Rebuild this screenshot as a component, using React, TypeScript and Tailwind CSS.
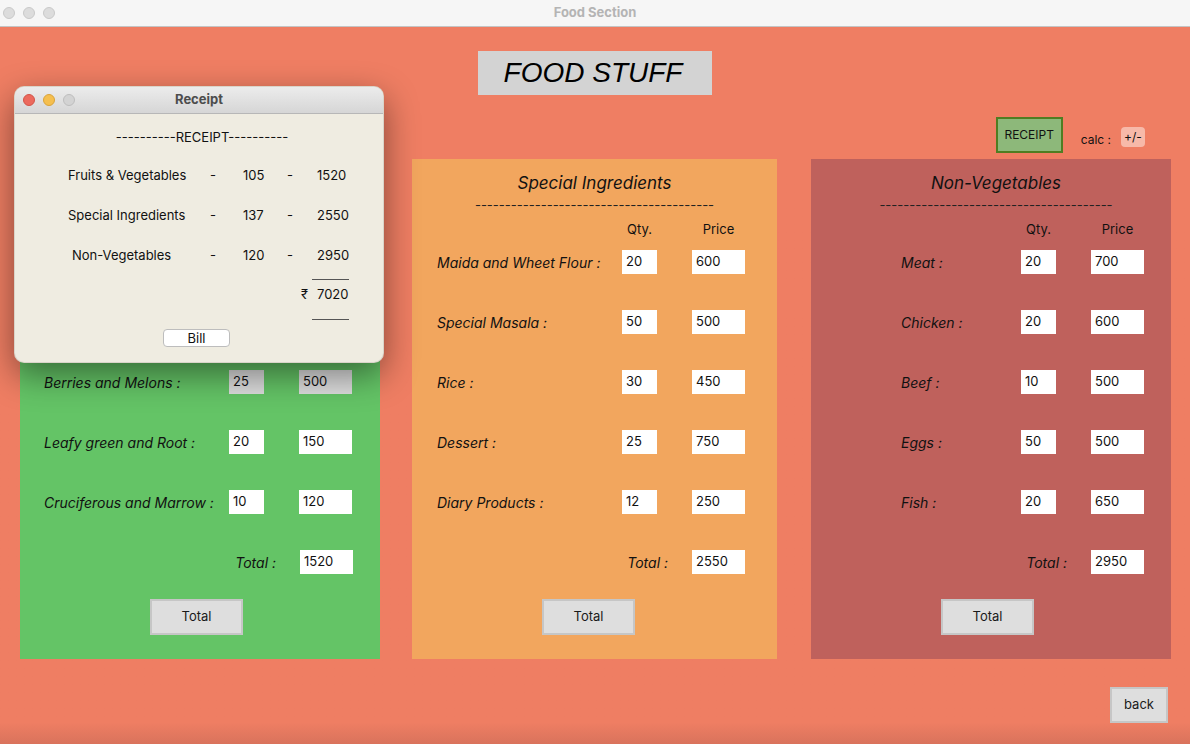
import React from "react";

type Row = { label: string; qty: string; price: string };

const FONT = "font-['Inter','Noto_Sans',sans-serif]";

// ── small bits ─────────────────────────────────────────────────────────────
function Field({ value, w, dim }: { value: string; w: string; dim?: boolean }) {
  return (
    <div
      className={`${w} h-6 flex items-center pl-[4px] text-[13px] text-[#111] ${
        dim ? "bg-[#dcdcdc]" : "bg-white"
      }`}
    >
      {value}
    </div>
  );
}

function GreyButton({ label, className }: { label: string; className?: string }) {
  return (
    <button
      className={`h-9 flex items-center justify-center bg-[#dedede] border-2 border-[#c6c6c6] text-[13px] text-[#1a1a1a] ${className ?? ""}`}
    >
      {label}
    </button>
  );
}

// ── one food panel ─────────────────────────────────────────────────────────
function Panel({
  title,
  dashes,
  rows,
  total,
  bg,
  width,
  labelW,
  labelPad,
  headPad = "",
  dimRows = [],
}: {
  title: string;
  dashes: string;
  rows: Row[];
  total: string;
  bg: string;
  width: string;
  labelW: string;
  labelPad: string;
  headPad?: string;
  dimRows?: number[];
}) {
  return (
    <section className={`${bg} ${width} h-[500px] pt-[13px] flex flex-col`}>
      <h2 className={`h-[22px] leading-[22px] text-center italic text-[17px] text-[#111] ${headPad}`}>{title}</h2>
      <div className={`mt-[3px] h-4 leading-4 text-center text-[13px] text-[#222] whitespace-nowrap ${headPad}`}>
        {dashes}
      </div>

      <div className="mt-[9px] h-4 flex items-center text-[13px] text-[#111]">
        <div className="w-[210px]" />
        <div className="w-[35px] text-center">Qty.</div>
        <div className="w-[35px]" />
        <div className="w-[53px] text-center">Price</div>
      </div>

      <div className="mt-3 flex flex-col gap-9">
        {rows.map((r, i) => (
          <div key={i} className="h-6 flex items-center">
            <div className={`${labelPad} ${labelW} italic text-[14px] text-[#111] whitespace-nowrap`}>{r.label}</div>
            <Field value={r.qty} w="w-[35px]" dim={dimRows.includes(i)} />
            <div className="w-[35px]" />
            <Field value={r.price} w="w-[53px]" dim={dimRows.includes(i)} />
          </div>
        ))}
        <div className="h-6 flex items-center">
          <div className="w-[258px] pr-[2px] text-right italic text-[14px] text-[#111]">Total :</div>
          <div className="w-[22px]" />
          <Field value={total} w="w-[53px]" />
        </div>
      </div>

      <div className="mt-[25px] pl-[130px]">
        <GreyButton label="Total" className="w-[93px]" />
      </div>
    </section>
  );
}

// ── receipt popup ──────────────────────────────────────────────────────────
function ReceiptRow({ label, qty, amt, pad }: { label: string; qty: string; amt: string; pad?: string }) {
  return (
    <div className="h-4 flex items-center text-[13px] text-[#111]">
      <div className={pad ?? "w-[142px] pl-[53px] box-content"}>{label}</div>
      <div className="w-[33px]">-</div>
      <div className="w-[44px]">{qty}</div>
      <div className="w-[30px]">-</div>
      <div>{amt}</div>
    </div>
  );
}

function ReceiptWindow() {
  return (
    <div className="absolute left-[14px] top-[59px] w-[370px] h-[277px] rounded-[10px] overflow-hidden bg-[#efece1] shadow-[0_12px_34px_rgba(0,0,0,0.45)] border border-[#b9b2a6]/40">
      <div className="h-[27px] relative flex items-center justify-center bg-gradient-to-b from-[#ececec] to-[#d6d6d6] border-b border-[#b7b7b7]">
        <div className="absolute left-[8px] top-[7px] flex gap-2">
          <span className="w-3 h-3 rounded-full bg-[#ec6a5e] border border-[#d25448]" />
          <span className="w-3 h-3 rounded-full bg-[#f5bf4f] border border-[#d9a33a]" />
          <span className="w-3 h-3 rounded-full bg-[#d3d3d3] border border-[#bdbdbd]" />
        </div>
        <span className="text-[13px] font-bold text-[#4d4d4d]">Receipt</span>
      </div>

      <div className="pt-[14px] flex flex-col">
        <div className="h-4 text-center text-[13px] text-[#111] pl-[6px]">----------RECEIPT----------</div>
        <div className="mt-6 flex flex-col gap-6">
          <ReceiptRow label="Fruits & Vegetables" qty="105" amt="1520" />
          <ReceiptRow label="Special Ingredients" qty="137" amt="2550" />
          <ReceiptRow label="Non-Vegetables" qty="120" amt="2950" pad="w-[138px] pl-[57px] box-content" />
        </div>
        <div className="mt-[15px] ml-[297px] w-[37px] h-px bg-[#555]" />
        <div className="mt-[7px] h-4 flex items-center text-[13px] text-[#111]">
          <div className="w-[286px]" />
          <div className="w-[16px]">₹</div>
          <div>7020</div>
        </div>
        <div className="mt-4 ml-[297px] w-[37px] h-px bg-[#555]" />
        <div className="mt-[5px] pl-[148px]">
          <button className="w-[67px] h-[18px] rounded-[4px] bg-white border border-[#bdbdbd] text-[13px] leading-[16px] text-[#111]">
            Bill
          </button>
        </div>
      </div>
    </div>
  );
}

// ── page ───────────────────────────────────────────────────────────────────
export default function App() {
  // first rows of this panel sit under the receipt window
  const fruits: Row[] = [
    { label: "", qty: "", price: "" },
    { label: "", qty: "", price: "" },
    { label: "Berries and Melons :", qty: "25", price: "500" },
    { label: "Leafy green and Root :", qty: "20", price: "150" },
    { label: "Cruciferous and Marrow :", qty: "10", price: "120" },
  ];
  const special: Row[] = [
    { label: "Maida and Wheet Flour :", qty: "20", price: "600" },
    { label: "Special Masala :", qty: "50", price: "500" },
    { label: "Rice :", qty: "30", price: "450" },
    { label: "Dessert :", qty: "25", price: "750" },
    { label: "Diary Products :", qty: "12", price: "250" },
  ];
  const nonveg: Row[] = [
    { label: "Meat :", qty: "20", price: "700" },
    { label: "Chicken :", qty: "20", price: "600" },
    { label: "Beef :", qty: "10", price: "500" },
    { label: "Eggs :", qty: "50", price: "500" },
    { label: "Fish :", qty: "20", price: "650" },
  ];

  return (
    <div className={`w-[1190px] h-[744px] overflow-hidden flex flex-col bg-[#ef7e63] ${FONT}`}>
      {/* ── macOS title bar ── */}
      <header className="h-[27px] shrink-0 relative flex items-center justify-center bg-[#f6f6f6] border-b border-[#c4c4c4]">
        <div className="absolute left-[3px] top-[7px] flex gap-2">
          <span className="w-3 h-3 rounded-full bg-[#dcdcdc] border border-[#c9c9c9]" />
          <span className="w-3 h-3 rounded-full bg-[#dcdcdc] border border-[#c9c9c9]" />
          <span className="w-3 h-3 rounded-full bg-[#dcdcdc] border border-[#c9c9c9]" />
        </div>
        <span className="text-[13px] font-bold text-[#b4b4b4]">Food Section</span>
      </header>

      <main className="relative flex-1 flex flex-col bg-gradient-to-b from-[#ef7e63] from-[97%] to-[#d9735c]">
        {/* heading */}
        <div className="mt-6 mx-auto w-[234px] h-[44px] bg-[#d3d3d3] flex items-center justify-center">
          <h1 className="italic text-[28px] text-black font-['Liberation_Sans',sans-serif] pr-[4px]">FOOD STUFF</h1>
        </div>

        {/* toolbar */}
        <div className="mt-[22px] h-9 flex items-center justify-end pr-[45px]">
          <button className="w-[67px] h-9 bg-[#8db87a] border-2 border-[#4f7d22] text-[12px] text-[#111]">
            RECEIPT
          </button>
          <span className="ml-[18px] mt-[9px] text-[12px] text-[#111]">calc :</span>
          <button className="ml-[10px] mt-[3px] w-[24px] h-5 rounded-[4px] bg-[#f7b9a9] text-[12px] text-[#111]">
            +/-
          </button>
        </div>

        {/* panels */}
        <div className="mt-[6px] pl-5 flex">
          <Panel
            title=""
            dashes=""
            rows={fruits}
            total="1520"
            bg="bg-[#64c466]"
            width="w-[360px]"
            labelW="w-[185px]"
            labelPad="pl-[24px] box-content"
            dimRows={[2]}
          />
          <div className="w-8" />
          <Panel
            title="Special Ingredients"
            dashes="----------------------------------------"
            rows={special}
            total="2550"
            bg="bg-[#f2a65e]"
            width="w-[365px]"
            labelW="w-[210px]"
            labelPad="pl-[25px]"
          />
          <div className="w-[34px]" />
          <Panel
            title="Non-Vegetables"
            dashes="---------------------------------------"
            rows={nonveg}
            total="2950"
            bg="bg-[#bf615c]"
            width="w-[360px]"
            labelW="w-[210px]"
            labelPad="pl-[90px]"
            headPad="pl-[10px]"
          />
        </div>

        {/* back */}
        <div className="mt-7 flex justify-end pr-[22px]">
          <GreyButton label="back" className="w-[58px]" />
        </div>

        <ReceiptWindow />
      </main>
    </div>
  );
}
